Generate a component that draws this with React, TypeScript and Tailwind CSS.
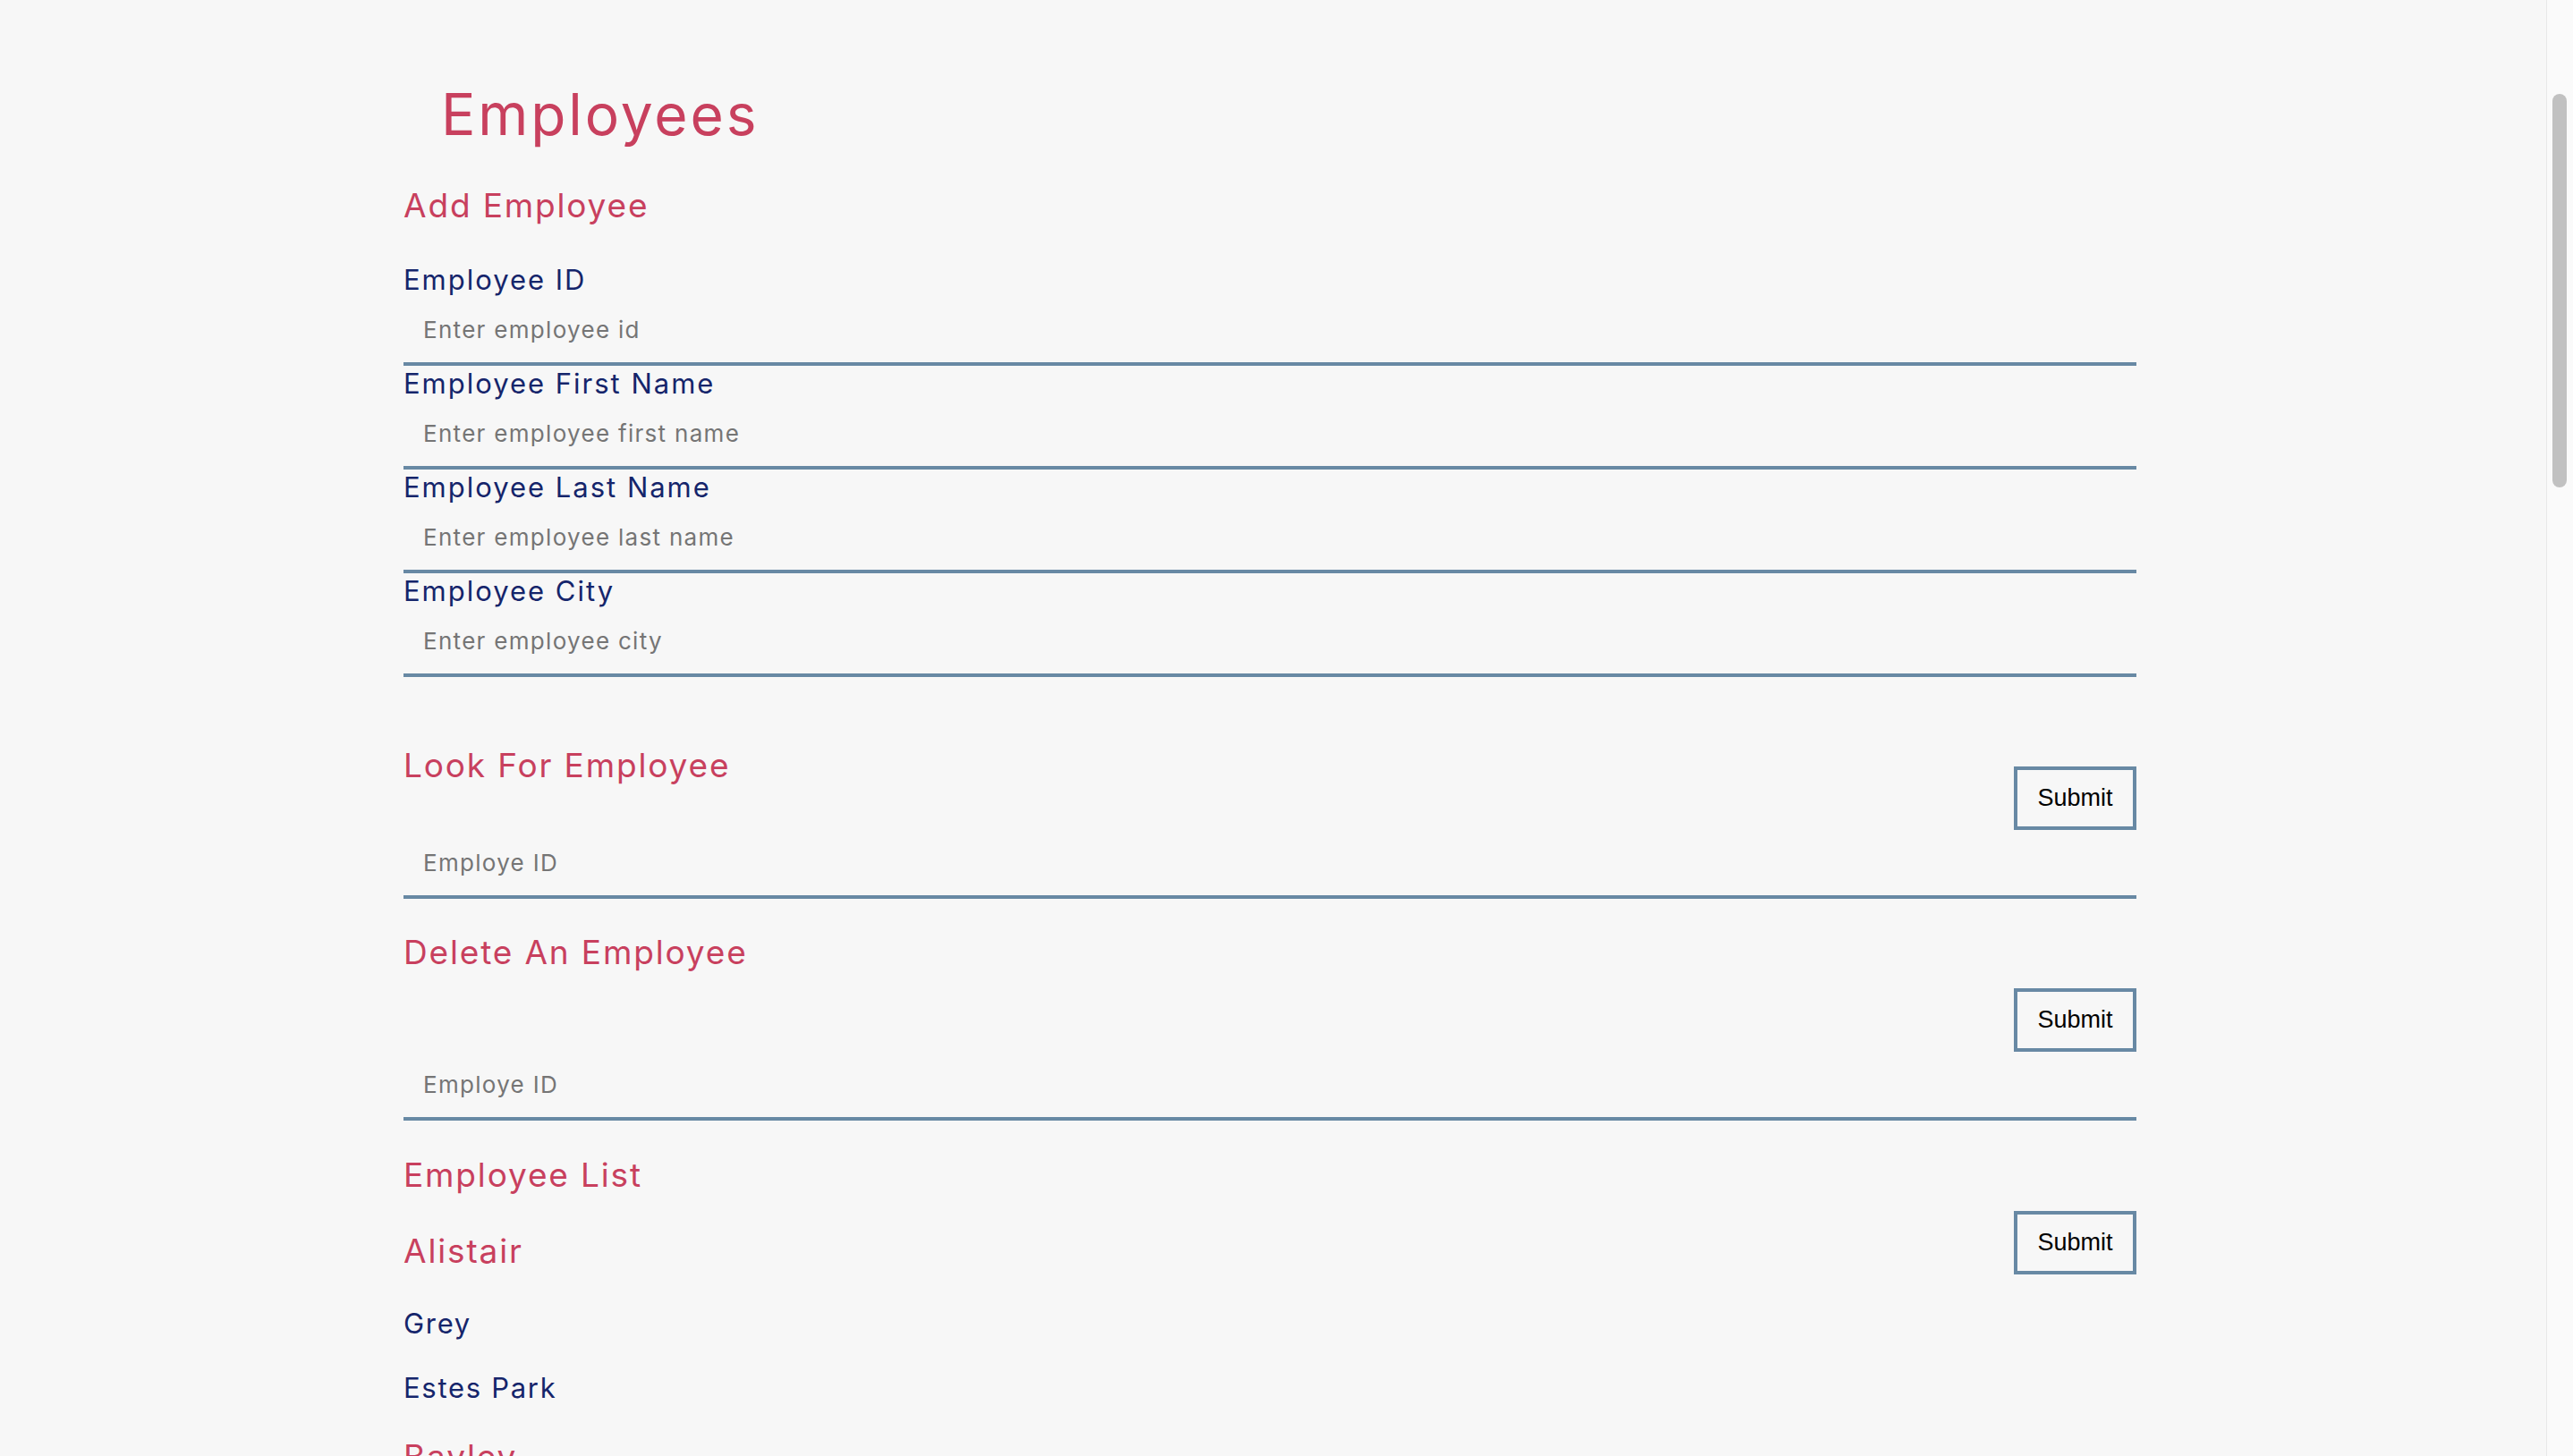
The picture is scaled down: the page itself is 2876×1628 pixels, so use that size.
import React from "react";

const font = { fontFamily: "Inter, 'Noto Sans', sans-serif" };

const inputCls =
  "block h-[77px] w-full border-b-4 border-[#6889a4] bg-transparent pl-[22px] text-[26px] tracking-[0.05em] text-[#15256b] outline-none placeholder:text-[#757575]";

function Field({ label, placeholder }: { label: string; placeholder: string }) {
  return (
    <div>
      <label className="block text-[31px] leading-[39px] tracking-[0.064em] text-[#15256b]">{label}</label>
      <input type="text" placeholder={placeholder} className={inputCls} style={font} />
    </div>
  );
}

function IdInput() {
  return <input type="text" placeholder="Employe ID" className={inputCls} style={font} />;
}

function SubmitButton({ className = "" }: { className?: string }) {
  return (
    <button
      type="button"
      className={`h-[71px] w-[137px] shrink-0 border-4 border-[#6889a4] bg-transparent text-[27px] text-black ${className}`}
      style={{ fontFamily: "'Liberation Sans', Arial, sans-serif" }}
    >
      Submit
    </button>
  );
}

const h3 = "text-[37px] leading-[42px] font-normal tracking-[0.05em] text-[#c8405e]";
const body = "text-[31px] leading-[39px] tracking-[0.055em] text-[#15256b]";

export default function App() {
  return (
    <div className="flex h-[1628px] w-full overflow-hidden bg-[#f7f7f7]" style={font}>
      <main className="min-w-0 flex-1">
        <div className="ml-[451px] w-[1937px] pt-[92px]">
          <h1 className="pl-[42px] text-[64px] font-normal leading-[72px] tracking-[0.045em] text-[#c8405e]">
            Employees
          </h1>

          <h3 className={`mt-[45px] ${h3}`}>Add Employee</h3>
          <div className="mt-[42px]">
            <Field label="Employee ID" placeholder="Enter employee id" />
            <Field label="Employee First Name" placeholder="Enter employee first name" />
            <Field label="Employee Last Name" placeholder="Enter employee last name" />
            <Field label="Employee City" placeholder="Enter employee city" />
          </div>

          <section className="mt-[78px]">
            <div className="flex h-[93px] justify-between">
              <h3 className={h3}>Look For Employee</h3>
              <SubmitButton className="self-end" />
            </div>
            <IdInput />
          </section>

          <section className="mt-[39px]">
            <div className="flex h-[132px] justify-between">
              <h3 className={h3}>Delete An Employee</h3>
              <SubmitButton className="self-end" />
            </div>
            <IdInput />
          </section>

          <section className="mt-[40px] flex justify-between">
            <div>
              <h3 className={h3}>Employee List</h3>
              <h3 className={`mt-[43px] ${h3}`}>Alistair</h3>
              <p className={`mt-[40px] ${body}`}>Grey</p>
              <p className={`mt-[33px] ${body}`}>Estes Park</p>
              <h3 className={`mt-[37px] ${h3}`}>Bayley</h3>
            </div>
            <SubmitButton className="mt-[61px]" />
          </section>
        </div>
      </main>
      <div className="h-full w-[30px] shrink-0 border-l border-[#e8e8e8] bg-[#fafafa] pt-[105px]">
        <div className="ml-[6px] h-[440px] w-[16px] rounded-full bg-[#c1c1c1]" />
      </div>
    </div>
  );
}
